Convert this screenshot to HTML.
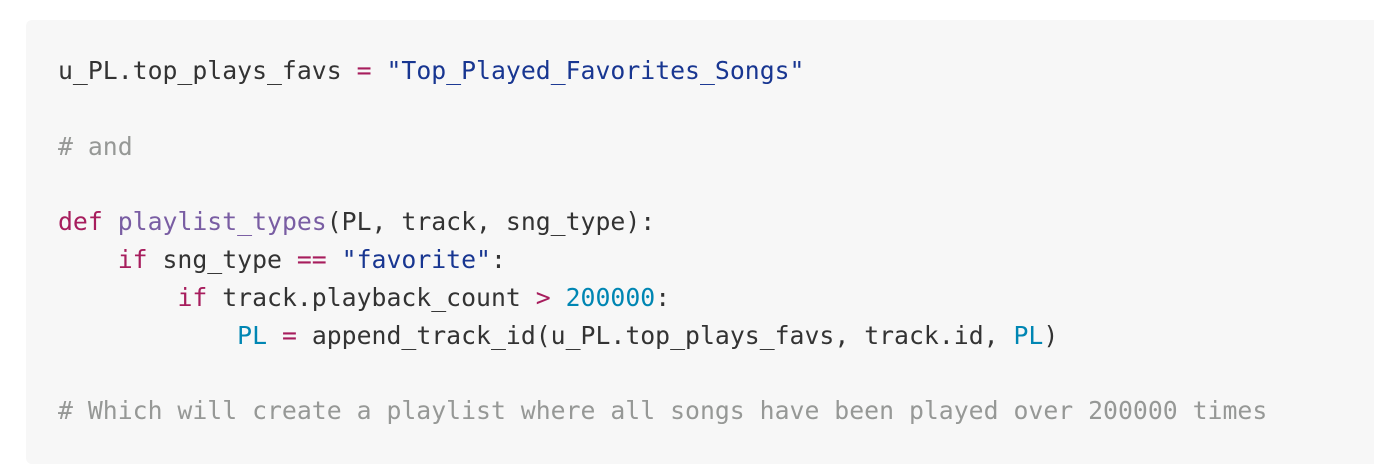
<!DOCTYPE html>
<html><head><style>
html,body{margin:0;padding:0;background:#fff;width:1374px;height:472px;overflow:hidden}
.box{position:absolute;left:26px;top:20px;width:1360px;height:444px;background:#f7f7f7;border-radius:6px}
pre{position:absolute;left:58px;top:52px;margin:0;font-family:"DejaVu Sans Mono","Liberation Mono",monospace;font-size:24.8px;line-height:37.8px;color:#333}
.k{color:#a71d5d}.s{color:#183691}.f{color:#795da3}.n{color:#0086b3}.c{color:#969896}
</style></head><body>
<div class="box"></div>
<pre>u_PL.top_plays_favs <span class="k">=</span> <span class="s">"Top_Played_Favorites_Songs"</span>

<span class="c"># and</span>

<span class="k">def</span> <span class="f">playlist_types</span>(PL, track, sng_type):
    <span class="k">if</span> sng_type <span class="k">==</span> <span class="s">"favorite"</span>:
        <span class="k">if</span> track.playback_count <span class="k">&gt;</span> <span class="n">200000</span>:
            <span class="n">PL</span> <span class="k">=</span> append_track_id(u_PL.top_plays_favs, track.id, <span class="n">PL</span>)

<span class="c"># Which will create a playlist where all songs have been played over 200000 times</span></pre>
</body></html>
